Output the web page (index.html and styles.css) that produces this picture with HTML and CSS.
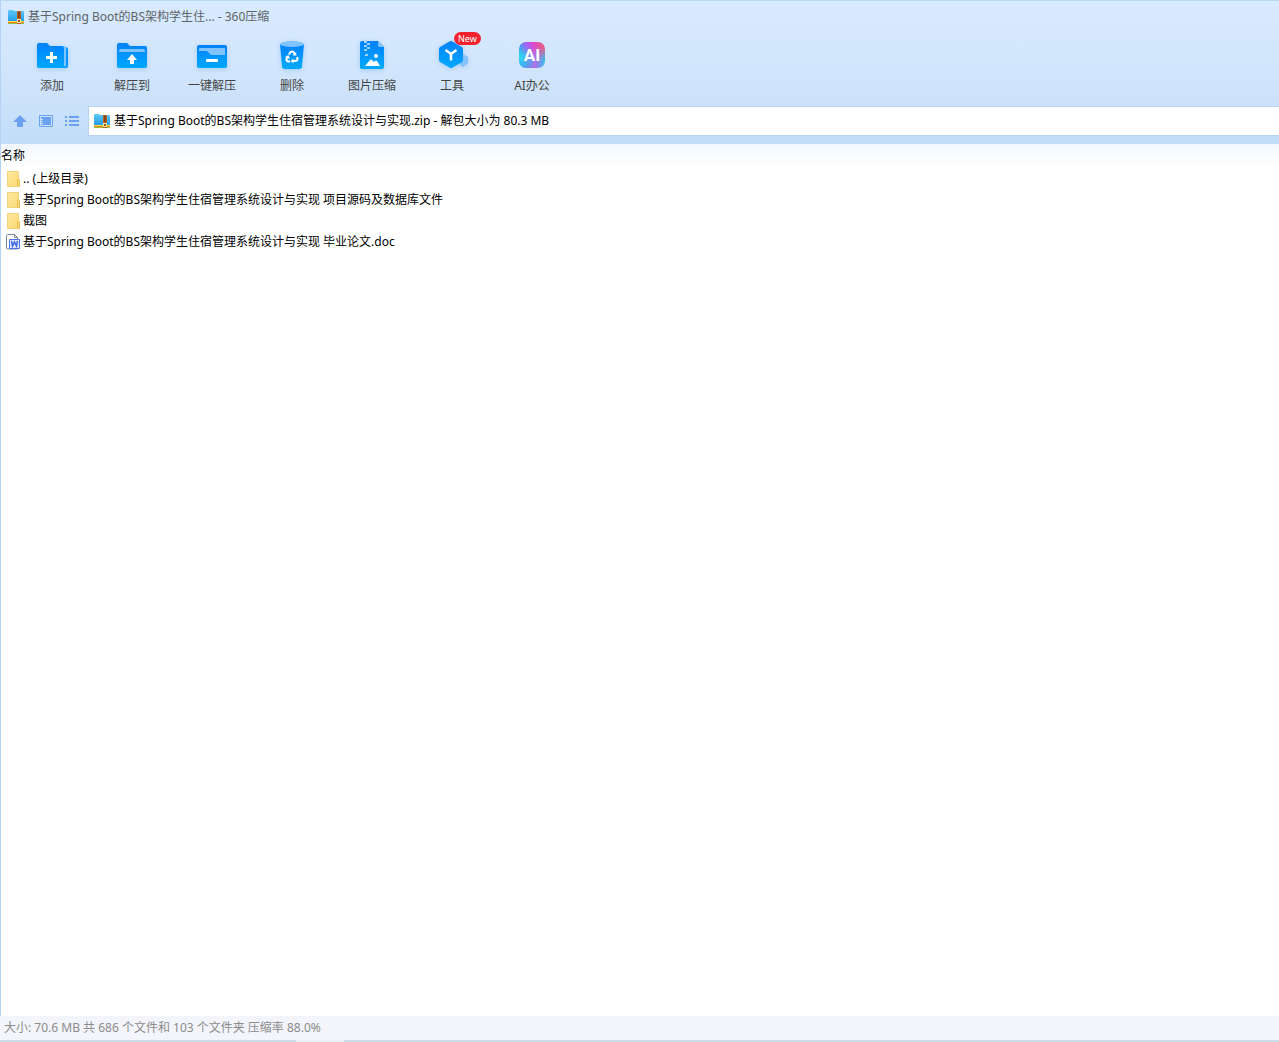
FILE: index.html
```html
<!DOCTYPE html>
<html lang="zh-CN">
<head>
    <meta charset="UTF-8">
    <meta name="viewport" content="width=device-width, initial-scale=1.0">
    <title>360压缩</title>
    <link rel="stylesheet" href="styles.css">
</head>
<body>
    <!-- 共用图标 -->
    <svg class="sprite" aria-hidden="true">
        <defs>
            <linearGradient id="blue" x1="0" y1="0" x2="0" y2="1">
                <stop offset="0" stop-color="#0081fb"/>
                <stop offset="1" stop-color="#00a9ff"/>
            </linearGradient>
            <linearGradient id="zipBlue" x1="0" y1="0" x2="0" y2="1">
                <stop offset="0" stop-color="#5dc9fb"/>
                <stop offset="1" stop-color="#269ee9"/>
            </linearGradient>
            <linearGradient id="yellow" x1="0" y1="0" x2="1" y2="1">
                <stop offset="0" stop-color="#ffe9a2"/>
                <stop offset="1" stop-color="#fbd971"/>
            </linearGradient>
        </defs>
        <symbol id="icon-zip" viewBox="0 0 16 14">
            <path d="M0 1q0-1 1-1h4l1 1h9q1 0 1 1v9H0z" fill="url(#zipBlue)"/>
            <path d="M0 11h16v1H0z" fill="#f8df46"/>
            <path d="M0 12h16v1H0z" fill="#f57c1f"/>
            <path d="M0 13h16q0 1-1 1H1q-1 0-1-1z" fill="#8ac53c"/>
            <path d="M9 1h4v13H9z" fill="#b5611f"/>
            <path d="M10 2h1v1h-1zM11 3h1v1h-1zM10 4h1v1h-1zM11 5h1v1h-1zM10 6h1v1h-1zM11 7h1v1h-1z" fill="#5a2b10"/>
            <path d="M9 9h4v4H9z" fill="#fbe3a0"/>
            <path d="M10 10h2v2h-2z" fill="#9a5a22"/>
        </symbol>
        <symbol id="icon-folder" viewBox="0 0 14 16">
            <path d="M1.500.5h11v15h-11z" fill="url(#yellow)" stroke="#f0d47a"/>
            <path d="M11.500 15.500v-7l1-1 1 1v7z" fill="#fbdc7c" stroke="#e8c257"/>
        </symbol>
    </svg>

    <div class="window">
        <header class="top">
            <!-- 标题栏 -->
            <div class="titlebar">
                <svg class="icon-zip"><use href="#icon-zip"/></svg>
                <h1>基于Spring Boot的BS架构学生住... - 360压缩</h1>
            </div>

            <!-- 工具栏 -->
            <nav class="toolbar">
                <button type="button" class="tool">
                    <svg viewBox="0 0 32 32">
                        <path d="M28 7h1q3 0 3 3v16q0 2-2 2h-2z" fill="#0796fd"/>
                        <path d="M26 6h1q3 0 3 3v17h-4z" fill="#82c5ff"/>
                        <path d="M1 5q0-2 2-2h8l3 3h12q2 0 2 2v20H3q-2 0-2-2z" fill="url(#blue)"/>
                        <path d="M27 26h4l-1 2h-3z" fill="#00a2ff"/>
                        <path d="M10 17.500h11M15.500 12v11" stroke="#fff" stroke-width="3" fill="none"/>
                    </svg>
                    <span>添加</span>
                </button>
                <button type="button" class="tool">
                    <svg viewBox="0 0 32 32">
                        <path d="M1 5q0-2 2-2h8l3 3h15q2 0 2 2v18q0 2-2 2H3q-2 0-2-2z" fill="url(#blue)"/>
                        <path d="M3 12v-1q0-2 2-2h22q2 0 2 2v1z" fill="#80c4ff"/>
                        <path d="M16 14l5 6h-3v4h-4v-4h-3z" fill="#fff"/>
                    </svg>
                    <span>解压到</span>
                </button>
                <button type="button" class="tool">
                    <svg viewBox="0 0 32 32">
                        <rect x="1" y="5" width="30" height="23" rx="2" fill="url(#blue)"/>
                        <path d="M3 9q0-1 1-1h24q1 0 1 1v6H16q-1 0-2-1l-2-2q-1-1-2-1H3z" fill="#80c4ff"/>
                        <rect x="10" y="19" width="12" height="3" rx="1" fill="#fff"/>
                    </svg>
                    <span>一键解压</span>
                </button>
                <button type="button" class="tool">
                    <svg viewBox="0 0 32 32">
                        <path d="M4 4h24l-2 22q0 3-3 3H9q-3 0-3-3z" fill="url(#blue)"/>
                        <ellipse cx="16" cy="4" rx="12" ry="3" fill="#7fc3ff"/>
                        <path d="M13 14.500l1.500-2.500q1.500-1 3 0l1 2M21 17l.5 1.500q0 2.500-2.500 2.500h-2M14 21.500h-2q-2-1-1.500-2.500l1-2" fill="none" stroke="#fff" stroke-width="2"/>
                        <path d="M16.500 15.500h4l-.5-3.500zM17.500 18.500v5l-3-2.500zM9 17l3.500-2 1.500 4z" fill="#fff"/>
                    </svg>
                    <span>删除</span>
                </button>
                <button type="button" class="tool">
                    <svg viewBox="0 0 32 32">
                        <path d="M4 3q0-2 2-2h16l6 6v20q0 2-2 2H6q-2 0-2-2z" fill="url(#blue)"/>
                        <path d="M22 1l6 6h-4q-2 0-2-2z" fill="#80c4ff"/>
                        <path d="M8 1h3v2H8zM11 3h3v2h-3zM8 5h3v2H8zM11 7h3v2h-3zM8 9h3v2H8z" fill="#9ad1ff"/>
                        <path d="M9 14h3v2H9z" fill="#9ad1ff"/>
                        <path d="M9 26l5-6q1-1 2 0l2 2 1-1q1-1 2 0l3 5z" fill="#fff"/>
                        <circle cx="20" cy="16" r="2" fill="#fff"/>
                    </svg>
                    <span>图片压缩</span>
                </button>
                <button type="button" class="tool">
                    <svg viewBox="0 0 32 32">
                        <path d="M27 14l5 3v6l-5 4-5-4v-6z" fill="#83c3ff"/>
                        <path d="M13.500 1.500q1.500-1 3 0l9.500 5.500q1 1 1 2v11q0 1-1 2l-9.500 5.500q-1.500 1-3 0L4 22q-1-1-1-2V9q0-1 1-2z" fill="url(#blue)"/>
                        <path d="M9.500 10l5.500 4 5.500-4M15 14v6.500" fill="none" stroke="#fff" stroke-width="2.500"/>
                    </svg>
                    <span>工具</span>
                    <em class="badge">New</em>
                </button>
                <button type="button" class="tool">
                    <span class="ai-icon">AI</span>
                    <span>AI办公</span>
                </button>
            </nav>

            <!-- 地址栏 -->
            <div class="addressbar">
                <div class="nav-buttons">
                    <button type="button" aria-label="向上">
                        <svg viewBox="0 0 16 16"><path d="M8 2l7 7h-4v5H5V9H1z" fill="#6aa2ef"/></svg>
                    </button>
                    <button type="button" aria-label="预览">
                        <svg viewBox="0 0 16 16"><path d="M1.500 2.500h13v11h-13z" fill="none" stroke="#6aa2ef"/><path d="M6 4h7v8H3v-1h2v-1H3V9h2V8H3V7h2V6H3V4z" fill="#6aa2ef"/></svg>
                    </button>
                    <button type="button" aria-label="列表">
                        <svg viewBox="0 0 16 16"><path d="M1 3h2v2H1zM5 3h10v2H5zM1 7h2v2H1zM5 7h10v2H5zM1 11h2v2H1zM5 11h10v2H5z" fill="#6aa2ef"/></svg>
                    </button>
                </div>
                <label class="address">
                    <svg class="icon-zip"><use href="#icon-zip"/></svg>
                    <input type="text" aria-label="路径" value="基于Spring Boot的BS架构学生住宿管理系统设计与实现.zip - 解包大小为 80.3 MB">
                </label>
            </div>
        </header>

        <!-- 文件列表 -->
        <main class="content">
            <table class="files">
                <thead>
                    <tr><th>名称</th></tr>
                </thead>
                <tbody>
                    <tr><td><div class="file"><svg class="icon-file"><use href="#icon-folder"/></svg>.. (上级目录)</div></td></tr>
                    <tr><td><div class="file"><svg class="icon-file"><use href="#icon-folder"/></svg>基于Spring Boot的BS架构学生住宿管理系统设计与实现 项目源码及数据库文件</div></td></tr>
                    <tr><td><div class="file"><svg class="icon-file"><use href="#icon-folder"/></svg>截图</div></td></tr>
                    <tr><td><div class="file">
                        <svg class="icon-file" viewBox="0 0 14 16">
                            <path d="M.5 1.500q0-1 1-1h7l3 3v11.500H1.500q-1 0-1-1z" fill="#fff" stroke="#7d8494"/>
                            <path d="M8.500.5v3h3" fill="none" stroke="#7d8494"/>
                            <path d="M3.500 5.500h10v9h-10z" fill="#dfe8ff" stroke="#4a72ea"/>
                            <path d="M5.500 7l1 5 2-4 2 4 1-5" fill="none" stroke="#3f66e0" stroke-width="1.500"/>
                        </svg>基于Spring Boot的BS架构学生住宿管理系统设计与实现 毕业论文.doc</div></td></tr>
                </tbody>
            </table>
        </main>

        <!-- 状态栏 -->
        <footer class="statusbar">大小: 70.6 MB 共 686 个文件和 103 个文件夹 压缩率 88.0%</footer>
        <div class="bottom-edge"></div>
    </div>
</body>
</html>
```

FILE: styles.css
```css
* {
    margin: 0;
    padding: 0;
    box-sizing: border-box;
}

body {
    font-family: "Noto Sans", "Noto Sans CJK SC", sans-serif;
    font-size: 12px;
    line-height: 20px;
    color: #000;
    background: #fff;
}

button,
input {
    font: inherit;
    border: none;
    background: none;
}

svg {
    display: block;
    flex: none;
}

.sprite {
    position: absolute;
    width: 0;
    height: 0;
}

.window {
    display: flex;
    flex-direction: column;
    min-height: 100vh;
}

/* 顶部区域 */
.top {
    padding-bottom: 8px;
    border-top: 1px solid #b9d6f3;
    border-left: 1px solid #b5d3f5;
    background: linear-gradient(#d8eaff, #cfe4fb 60%, #c2ddf9);
}

.titlebar {
    display: flex;
    align-items: center;
    gap: 4px;
    height: 31px;
    padding-left: 7px;
}

.titlebar h1 {
    font-size: 12px;
    font-weight: normal;
    color: #5f6468;
}

.icon-zip {
    width: 16px;
    height: 14px;
}

/* 工具栏 */
.toolbar {
    display: flex;
    padding: 8px 11px 10px;
}

.tool {
    position: relative;
    display: flex;
    flex-direction: column;
    align-items: center;
    gap: 4px;
    width: 80px;
    color: #444;
    white-space: nowrap;
}

.tool svg {
    width: 32px;
    height: 32px;
    overflow: visible;
    filter: drop-shadow(0 1px 2px rgba(60, 140, 230, 0.3));
}

.badge {
    position: absolute;
    top: -8px;
    left: 42px;
    padding: 0 4px;
    border-radius: 7px;
    background: #f5222d;
    color: #fff;
    font-size: 9px;
    font-style: normal;
    line-height: 13px;
}

.ai-icon {
    width: 26px;
    height: 26px;
    margin: 2px 0 4px;
    border-radius: 7px;
    background:
        radial-gradient(circle at 100% 10%, #ff4f74, transparent 45%),
        radial-gradient(circle at 55% 0, #d645f0, transparent 55%),
        radial-gradient(circle at 0 60%, #2fdcf1, transparent 60%),
        linear-gradient(to right, #2e86f4, #b56bea 60%, #35c3ec);
    color: #fff;
    font: bold 17px/26px Roboto, sans-serif;
}

/* 地址栏 */
.addressbar {
    display: flex;
    align-items: center;
}

.nav-buttons {
    display: flex;
    gap: 10px;
    padding: 0 8px 0 11px;
}

.nav-buttons svg {
    width: 16px;
    height: 16px;
}

.address {
    display: flex;
    flex: 1;
    align-items: center;
    gap: 4px;
    height: 30px;
    padding-left: 5px;
    border: 1px solid #b8d5f5;
    border-right: none;
    background: #fff;
}

.address input {
    flex: 1;
    min-width: 0;
    outline: none;
}

/* 文件列表 */
.content {
    flex: 1;
    border-left: 1px solid #b5d3f5;
    background: #fff;
}

.files {
    width: 100%;
    border-collapse: collapse;
}

.files th {
    height: 24px;
    background: linear-gradient(#f2f8ff, #fff);
    font-weight: normal;
    text-align: left;
}

.file {
    display: flex;
    align-items: center;
    gap: 3px;
    height: 21px;
    padding-left: 5px;
}

.icon-file {
    width: 14px;
    height: 16px;
}

/* 状态栏 */
.statusbar {
    padding: 2px 4px;
    background: #f3f5fa;
    color: #8c8c8c;
}

.bottom-edge {
    height: 2px;
    background: linear-gradient(#e9f1f5, #e9f1f5) 296px 0 / 48px 2px no-repeat #cbdde6;
}
```
